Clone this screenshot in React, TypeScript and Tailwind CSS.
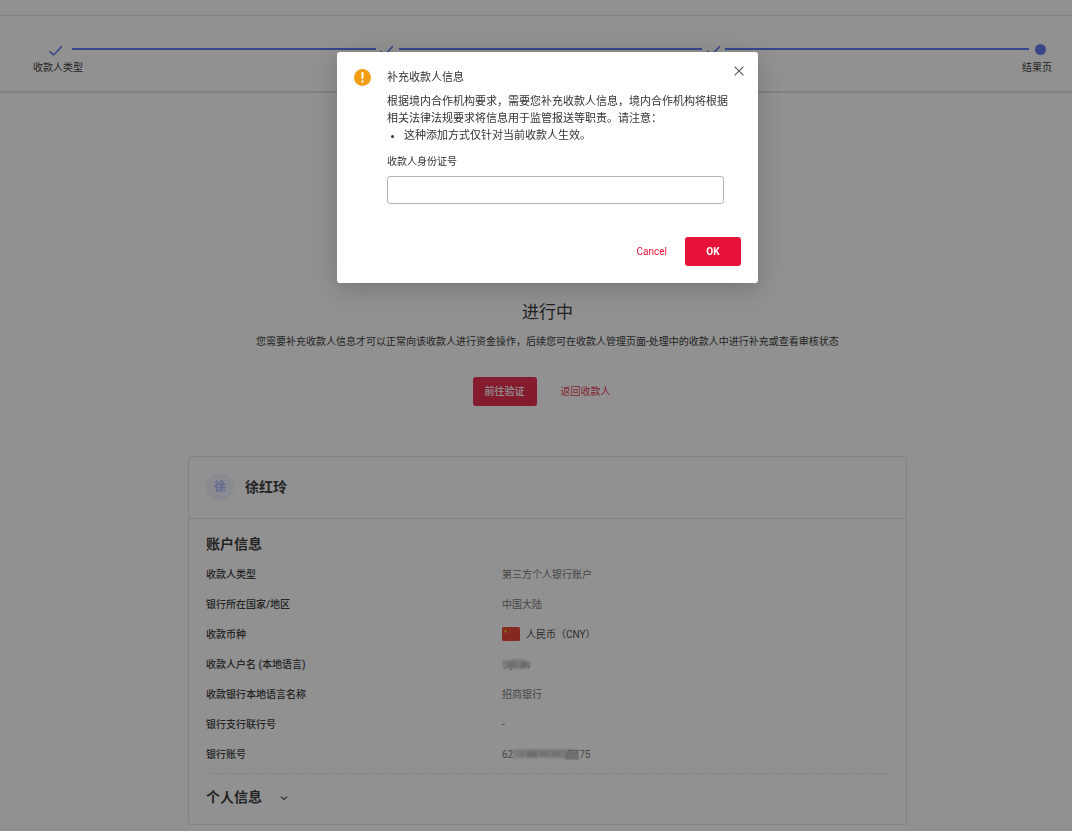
import { useState } from 'react';
import type { ReactNode } from 'react';

interface DetailRow {
  label: string;
  value: ReactNode;
}

function CheckMark() {
  return (
    <svg width="16" height="16" viewBox="0 0 16 16" fill="none" className="shrink-0" aria-hidden="true">
      <path d="M1.4 10.2 5.6 14 13.8 5.4" stroke="#4f69ee" strokeWidth="1.6" />
    </svg>
  );
}

function StepLine() {
  return <span className="h-0.5 flex-1 bg-[#4f69ee]" />;
}

function WarningIcon() {
  return (
    <svg width="17" height="17" viewBox="0 0 17 17" className="shrink-0" aria-hidden="true">
      <circle cx="8.5" cy="8.5" r="8.5" fill="#f29d13" />
      <path d="M7.4 3.2h2.2l-.3 6.9H7.7z" fill="#fff" />
      <rect x="7.4" y="11.5" width="2.2" height="2" rx=".6" fill="#fff" />
    </svg>
  );
}

function ChinaFlag() {
  return (
    <svg width="18" height="14" viewBox="0 0 18 14" className="shrink-0" aria-hidden="true">
      <rect width="18" height="14" rx="1.5" fill="#e52d1c" />
      <path d="m3.6 2.3.5 1.3h1.4l-1.1.9.4 1.4-1.2-.8-1.2.8.4-1.4-1.1-.9h1.4z" fill="#f5c518" />
      <g fill="#c9781c">
        <circle cx="6.8" cy="1.8" r=".5" />
        <circle cx="8.1" cy="3.1" r=".5" />
        <circle cx="8.1" cy="4.8" r=".5" />
        <circle cx="6.8" cy="6.1" r=".5" />
      </g>
    </svg>
  );
}

function MaskedName() {
  return (
    <svg width="30" height="13" viewBox="0 0 30 13" role="img" aria-label="已隐藏">
      <g className="blur-[1px]">
        <path d="M0 2h9l2-1h8l8 2v6l-6 2H6L0 9z" fill="#d2d2d2" />
        <rect x="6" y="4" width="6" height="6" fill="#b4b4b4" />
        <rect x="12" y="3" width="4" height="7" fill="#c4c4c4" />
        <rect x="19" y="4" width="6" height="6" fill="#b2b2b2" />
      </g>
      <path d="M2 11.5 4 9.5M8 11.5h2M26 3l3 3.5M25 7.5h3l-2 3.5" stroke="#8a8a8a" strokeWidth=".8" fill="none" />
    </svg>
  );
}

function MaskedDigits() {
  return (
    <svg width="66" height="12" viewBox="0 0 66 12" role="img" aria-label="已隐藏">
      <g className="blur-[1px]">
        <rect x="0" y="1" width="62" height="9" fill="#d6d6d6" />
        <rect x="6" y="4" width="5" height="5" fill="#c6c6c6" />
        <rect x="14" y="3" width="10" height="6" fill="#b4b4b4" />
        <rect x="27" y="3" width="8" height="5" fill="#bebebe" />
        <rect x="39" y="3" width="9" height="6" fill="#c0c0c0" />
        <rect x="52" y="3" width="14" height="9" fill="#b8b8b8" />
      </g>
      <path d="M55 2.5h4M61 2.5h4l-2 3" stroke="#777" strokeWidth=".8" fill="none" />
    </svg>
  );
}

const rows: DetailRow[] = [
  { label: '收款人类型', value: '第三方个人银行账户' },
  { label: '银行所在国家/地区', value: '中国大陆' },
  {
    label: '收款币种',
    value: (
      <>
        <ChinaFlag />
        <span className="ml-1.5 text-[#333]">人民币（CNY）</span>
      </>
    ),
  },
  { label: '收款人户名 (本地语言)', value: <MaskedName /> },
  { label: '收款银行本地语言名称', value: '招商银行' },
  { label: '银行支行联行号', value: '-' },
  {
    label: '银行账号',
    value: (
      <>
        62
        <MaskedDigits />
        75
      </>
    ),
  },
];

function Steps() {
  return (
    <nav className="h-[77px] border-b-2 border-[#e0e0e0] pt-[25px]" aria-label="进度">
      <div className="flex h-4 items-center pl-10 pr-5">
        <span className="flex w-8 justify-center">
          <CheckMark />
        </span>
        <StepLine />
        <span className="flex w-[23px] justify-center">
          <CheckMark />
        </span>
        <StepLine />
        <span className="flex w-[23px] justify-center">
          <CheckMark />
        </span>
        <StepLine />
        <span className="flex w-[23px] justify-center">
          <span className="size-[11px] rounded-full bg-[#4f69ee]" />
        </span>
      </div>
      <div className="mt-[3px] flex justify-between pl-[33px] pr-5 text-[10px] leading-4">
        <span>收款人类型</span>
        <span>结果页</span>
      </div>
    </nav>
  );
}

function PayeeCard() {
  const [expanded, setExpanded] = useState(false);

  return (
    <section className="mt-[50px] w-[719px] max-w-full rounded-[3px] border border-[#e0e0e0]">
      <header className="flex h-[62px] items-center gap-[11px] border-b border-[#e0e0e0] px-[17px] pb-0.5">
        <span className="flex size-7 items-center justify-center rounded-full bg-[#f0f3ff] text-[12px] font-bold text-[#a3b3ff]">
          徐
        </span>
        <h2 className="text-[14px] font-bold leading-5">徐红玲</h2>
      </header>
      <div className="px-[17px] pb-[17px] pt-[15px]">
        <h3 className="text-[14px] font-bold leading-5">账户信息</h3>
        <dl className="mt-[5px] text-[10px]">
          {rows.map((row) => (
            <div key={row.label} className="flex h-[30px] items-center">
              <dt className="w-[296px] shrink-0 font-medium">{row.label}</dt>
              <dd className="flex items-center text-[#666]">{row.value}</dd>
            </div>
          ))}
        </dl>
        <button
          type="button"
          aria-expanded={expanded}
          onClick={() => setExpanded(!expanded)}
          className="mt-1 flex w-full items-center gap-[18px] border-t border-dashed border-[#e0e0e0] pt-[13px] text-[14px] font-bold leading-5"
        >
          个人信息
          <svg width="8" height="8" viewBox="0 0 8 8" fill="none" aria-hidden="true">
            <path d="M.8 3.6 4 6.4l3.2-2.8" stroke="#333" strokeWidth="1.2" />
          </svg>
        </button>
      </div>
    </section>
  );
}

function PayeeDialog({ onClose }: { onClose: () => void }) {
  const [idNumber, setIdNumber] = useState('');

  return (
    <div className="fixed inset-0 flex items-start justify-center bg-[#232323]/50 pl-[23px] pt-[52px]">
      <div
        role="dialog"
        aria-modal="true"
        aria-labelledby="dialog-title"
        className="relative flex w-[421px] max-w-full gap-4 rounded-[3px] bg-white p-[17px] text-[#333] shadow-[0_6px_24px_rgba(0,0,0,0.2)]"
      >
        <WarningIcon />
        <button type="button" aria-label="关闭" onClick={onClose} className="absolute right-3.5 top-3.5">
          <svg width="10" height="10" viewBox="0 0 10 10" aria-hidden="true">
            <path d="m.6.6 8.8 8.8M9.4.6.6 9.4" stroke="#555" strokeWidth="1.1" />
          </svg>
        </button>
        <div className="min-w-0 flex-1">
          <h1 id="dialog-title" className="text-[11px] leading-[18px]">
            补充收款人信息
          </h1>
          <div className="mt-1.5 pr-1.5 text-[11px] leading-[17px]">
            <p>
              根据境内合作机构要求，需要您补充收款人信息，境内合作机构将根据相关法律法规要求将信息用于监管报送等职责。请注意：
            </p>
            <ul className="list-disc pl-[17px]">
              <li>这种添加方式仅针对当前收款人生效。</li>
            </ul>
          </div>
          <label htmlFor="id-number" className="mt-2.5 block text-[10px] leading-[15px]">
            收款人身份证号
          </label>
          <div className="mt-[7px] pr-[17px]">
            <input
              id="id-number"
              type="text"
              value={idNumber}
              onChange={(e) => setIdNumber(e.target.value)}
              className="block h-7 w-full rounded-[3px] border border-[#b5b5b5] px-2 text-[11px] outline-none"
            />
          </div>
          <div className="mt-[33px] flex items-center justify-end gap-[18px] text-[10px]">
            <button type="button" onClick={onClose} className="text-[#e61239]">
              Cancel
            </button>
            <button type="button" onClick={onClose} className="h-[29px] w-14 rounded-[3px] bg-[#e61239] font-bold text-white">
              OK
            </button>
          </div>
        </div>
      </div>
    </div>
  );
}

export default function App() {
  const [open, setOpen] = useState(true);

  return (
    <div className="bg-white font-[Roboto,'Noto_Sans_CJK_SC',sans-serif] text-[#222]">
      <div className="h-4 border-b border-[#e0e0e0]" />
      <Steps />
      <main className="flex flex-col items-center pb-1.5 pl-[23px] pt-[207px]">
        <h1 className="text-[17px] leading-6">进行中</h1>
        <p className="mt-2.5 text-[10px] leading-4">
          您需要补充收款人信息才可以正常向该收款人进行资金操作，后续您可在收款人管理页面-处理中的收款人中进行补充或查看审核状态
        </p>
        <div className="mt-[27px] flex items-center gap-6 pr-3 text-[10px]">
          <button
            type="button"
            onClick={() => setOpen(true)}
            className="h-[29px] w-16 rounded-[3px] bg-[#e61239] font-medium text-white"
          >
            前往验证
          </button>
          <a href="#payees" className="text-[#e61239]">
            返回收款人
          </a>
        </div>
        <PayeeCard />
      </main>
      {open ? <PayeeDialog onClose={() => setOpen(false)} /> : null}
    </div>
  );
}
